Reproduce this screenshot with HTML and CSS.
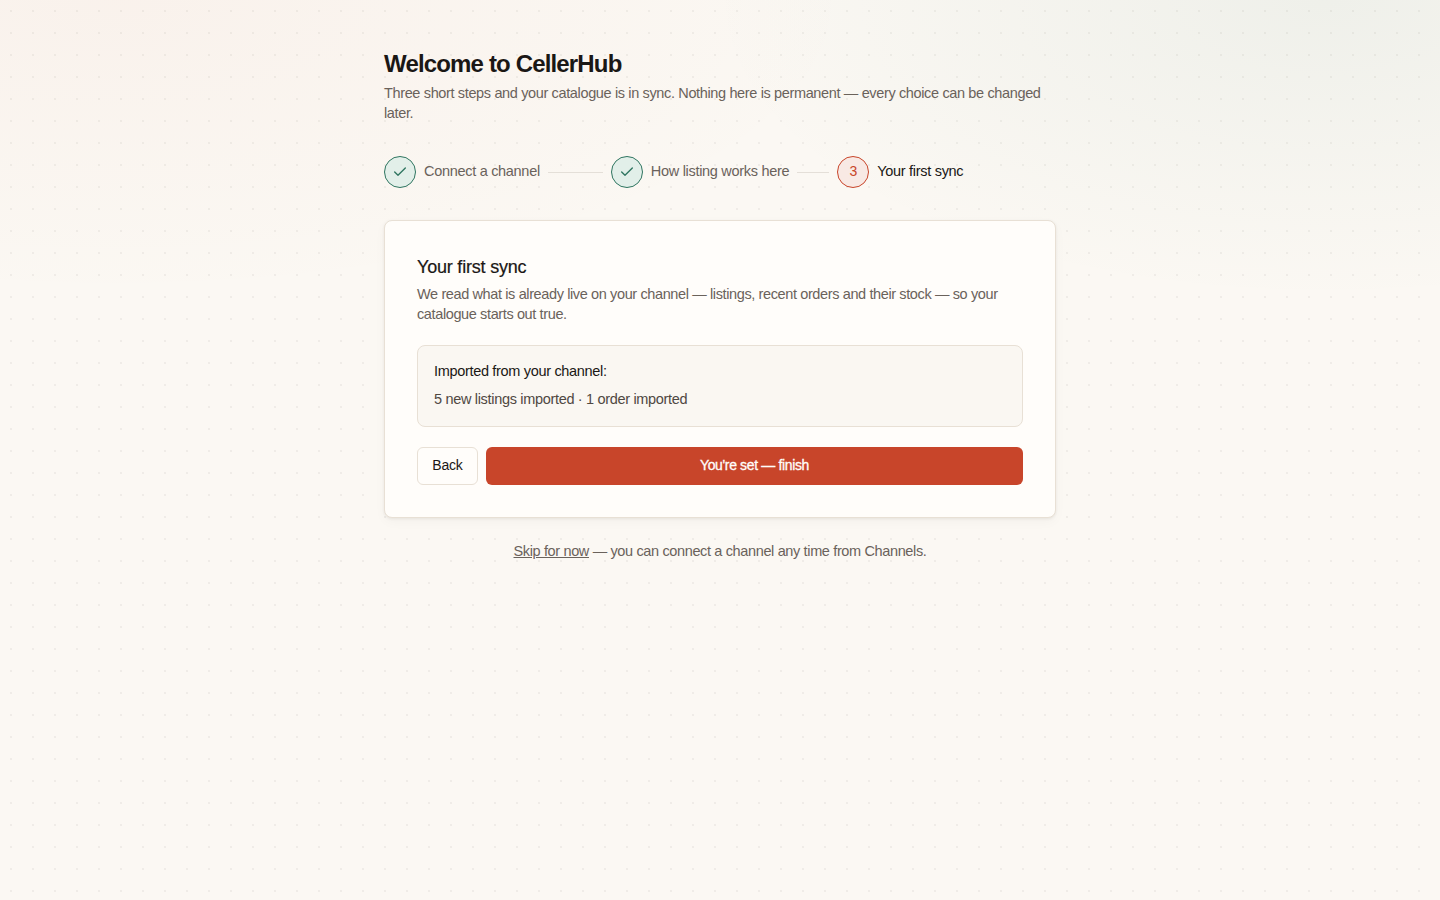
FILE: index.html
```html
<!DOCTYPE html>
<html lang="en">
<head>
<meta charset="utf-8">
<title>Welcome to CellerHub</title>
<link rel="stylesheet" href="styles.css">
</head>
<body>
<main class="page">
  <h1 class="title">Welcome to CellerHub</h1>
  <p class="lead">Three short steps and your catalogue is in sync. Nothing here is permanent — every choice can be changed later.</p>
  <ol class="steps">
    <li class="step done">
      <span class="badge"><svg width="16" height="16" viewBox="0 0 24 24" fill="none" stroke="currentColor" stroke-width="2" stroke-linecap="round" stroke-linejoin="round"><path d="M20 6 9 17l-5-5"/></svg></span>
      <span class="label">Connect a channel</span>
    </li>
    <li class="rule rule-a"></li>
    <li class="step done">
      <span class="badge"><svg width="16" height="16" viewBox="0 0 24 24" fill="none" stroke="currentColor" stroke-width="2" stroke-linecap="round" stroke-linejoin="round"><path d="M20 6 9 17l-5-5"/></svg></span>
      <span class="label">How listing works here</span>
    </li>
    <li class="rule rule-b"></li>
    <li class="step current">
      <span class="badge">3</span>
      <span class="label">Your first sync</span>
    </li>
  </ol>
  <section class="card">
    <h2 class="card-title">Your first sync</h2>
    <p class="card-text">We read what is already live on your channel — listings, recent orders and their stock — so your catalogue starts out true.</p>
    <div class="summary">
      <p class="summary-head">Imported from your channel:</p>
      <p class="summary-body">5 new listings imported · 1 order imported</p>
    </div>
    <div class="actions">
      <button class="btn btn-back" type="button">Back</button>
      <button class="btn btn-finish" type="button">You're set — finish</button>
    </div>
  </section>
  <p class="skip"><a href="#">Skip for now</a> — you can connect a channel any time from Channels.</p>
</main>
</body>
</html>
```
FILE: styles.css
```css
* { box-sizing: border-box; }
html, body { margin: 0; height: 100%; }
body {
  min-height: 900px;
  color: #1a1715;
  font-family: "Liberation Sans", Arial, sans-serif;
  background-color: #fbf8f3;
  background-image:
    radial-gradient(circle, rgba(60, 50, 40, .06) 1px, transparent 1.2px),
    radial-gradient(ellipse 760px 300px at 8% 0%, rgba(200, 70, 40, .035), transparent 100%),
    radial-gradient(ellipse 620px 300px at 92% 0%, rgba(45, 110, 90, .06), transparent 100%);
  background-size: 22px 22px, auto, auto;
}
.page { width: 672px; margin: 0 auto; padding-top: 48px; }
.title { margin: 0; font-size: 24px; line-height: 32px; font-weight: 700; letter-spacing: -.84px; color: #1a1715; }
.lead { margin: 3px 0 0; font-size: 14.5px; line-height: 20px; color: #6a625b; letter-spacing: -.36px; }
.steps { list-style: none; display: flex; align-items: center; gap: 8px; margin: 33px 0 32px; padding: 0; height: 32px; }
.step { display: flex; align-items: center; gap: 8px; }
.badge { width: 32px; height: 32px; border-radius: 50%; display: flex; align-items: center; justify-content: center; font-size: 14px; border: 1px solid; flex: none; }
.done .badge { background: #e2efe9; border-color: #2f7560; color: #2f7560; }
.current .badge { background: #f8e9e4; border-color: #c8452a; color: #c8452a; padding-bottom: 2px; }
.label { font-size: 14.5px; line-height: 20px; padding-bottom: 2px; color: #6a625b; letter-spacing: -.3px; white-space: nowrap; }
.current .label { color: #1a1715; }
.rule { height: 1px; background: #e4dfd8; }
.rule-a { width: 55px; }
.rule-b { width: 32px; }
.card { background: #fffdfa; border: 1px solid #e8e0d5; border-radius: 8px; padding: 32px; box-shadow: 0 1px 3px rgba(40, 30, 20, .07), 0 4px 12px rgba(40, 30, 20, .03); }
.card-title { margin: 0; font-size: 18px; line-height: 28px; font-weight: 400; color: #1a1715; -webkit-text-stroke: .2px #1a1715; letter-spacing: -.2px; }
.card-text { margin: 3px 0 0; font-size: 14.5px; line-height: 20px; color: #6a625b; letter-spacing: -.38px; }
.summary { margin-top: 21px; background: #faf7f2; border: 1px solid #e8e0d5; border-radius: 8px; padding: 15px 16px 16px; height: 82px; }
.summary p { margin: 0; font-size: 14.5px; line-height: 20px; letter-spacing: -.32px; }
.summary-head { color: #1a1715; }
.summary .summary-body { margin-top: 8px; color: #4f4842; }
.actions { display: flex; gap: 8px; margin-top: 20px; }
.btn { height: 38px; padding: 0 0 2px; border-radius: 6px; font-family: inherit; font-size: 14px; letter-spacing: -.2px; cursor: pointer; }
.btn-back { width: 61px; background: #fffdfa; border: 1px solid #e8e0d5; color: #1a1715; }
.btn-finish { flex: 1; background: #c8452a; border: 0; color: #fffdfa; -webkit-text-stroke: .3px #fffdfa; letter-spacing: -.35px; }
.skip { margin: 23px 0 0; text-align: center; font-size: 14.5px; line-height: 20px; color: #6a625b; letter-spacing: -.36px; }
.skip a { color: inherit; }
```
